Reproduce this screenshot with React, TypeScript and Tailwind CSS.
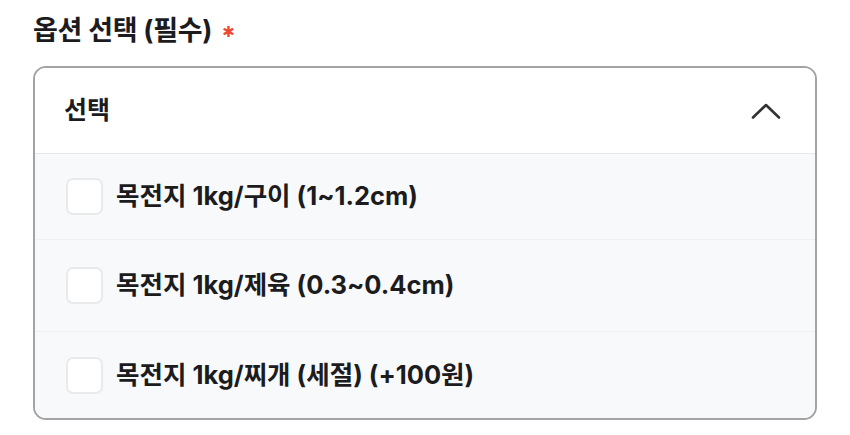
import { useState } from 'react';

const options = [
  '목전지 1kg/구이 (1~1.2cm)',
  '목전지 1kg/제육 (0.3~0.4cm)',
  '목전지 1kg/찌개 (세절) (+100원)',
];

export default function App() {
  const [checked, setChecked] = useState<boolean[]>([false, false, false]);

  return (
    <div
      className="min-h-screen bg-white px-[33px] pt-[12px] text-[#1c1c1e]"
      style={{ fontFamily: 'Inter, "Noto Sans CJK KR", sans-serif' }}
    >
      <h2 className="flex items-center gap-[10px] text-[27px] font-bold leading-[38px] tracking-[-0.3px]">
        옵션 선택 (필수)
        <span
          className="mt-[2px] text-[15px] leading-none text-[#ee4a32]"
          style={{ fontFamily: '"DejaVu Sans", sans-serif' }}
        >
          ✱
        </span>
      </h2>

      <div className="mt-[16px] w-[784px] overflow-hidden rounded-[13px] border-2 border-[#a3a3a6]">
        <button className="flex h-[85px] w-full items-center justify-between bg-white pl-[29px] pr-[34px] text-left">
          <span className="text-[25px] font-bold">선택</span>
          <svg
            aria-hidden
            viewBox="0 0 30 16"
            className="h-[16px] w-[30px]"
            fill="none"
            stroke="#333"
            strokeWidth="2.6"
            strokeLinecap="round"
            strokeLinejoin="round"
          >
            <path d="M2 14.5 15 2l13 12.5" />
          </svg>
        </button>
        <ul className="divide-y divide-[#eef0f3] border-t border-[#e6e7ea] bg-[#f8f9fb]">
          {options.map((label, i) => (
            <li
              key={label}
              className={`flex items-center gap-[13px] pl-[31px] ${i === 1 ? 'h-[92px]' : 'h-[86px]'}`}
            >
              <button
                aria-label={label}
                onClick={() => setChecked((c) => c.map((v, j) => (j === i ? !v : v)))}
                className="h-[37px] w-[37px] shrink-0 rounded-[7px] border-2 border-[#e9eaec] bg-white"
              />
              <span className="text-[25.5px] font-bold">{label}</span>
            </li>
          ))}
        </ul>
      </div>
    </div>
  );
}
